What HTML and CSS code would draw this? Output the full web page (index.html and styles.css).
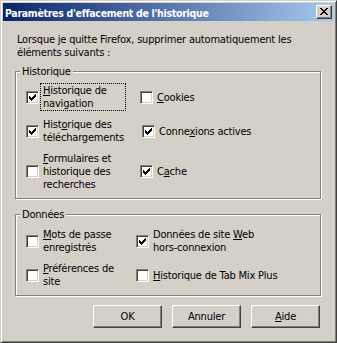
FILE: index.html
```html
<!DOCTYPE html>
<html lang="fr">
<head>
<meta charset="utf-8">
<title>Paramètres d'effacement de l'historique</title>
<link rel="stylesheet" href="styles.css">
</head>
<body>
<div class="window">
  <div class="titlebar">
    <span class="title">Paramètres d'effacement de l'historique</span>
    <span class="close"><svg width="8" height="7" viewBox="0 0 8 7" shape-rendering="crispEdges"><path d="M0 0h2v1h-2zM6 0h2v1h-2zM1 1h2v1h-2zM5 1h2v1h-2zM2 2h4v1h-4zM3 3h2v1h-2zM2 4h4v1h-4zM1 5h2v1h-2zM5 5h2v1h-2zM0 6h2v1h-2zM6 6h2v1h-2z" fill="#000"/></svg></span>
  </div>
  <div class="content">
    <p class="intro">Lorsque je quitte Firefox, supprimer automatiquement les<br>éléments suivants :</p>

    <section class="group g1">
      <span class="legend">Historique</span>
      <div class="opts">
        <div class="opt"><span class="cb"><svg width="7" height="7" viewBox="0 0 7 7" shape-rendering="crispEdges"><path d="M6 0h1v1h-1zM5 1h2v1h-2zM0 2h1v1h-1zM4 2h3v1h-3zM0 3h2v1h-2zM3 3h3v1h-3zM0 4h5v1h-5zM1 5h3v1h-3zM2 6h1v1h-1z" fill="#000"/></svg></span><span class="lbl focus"><u>H</u>istorique de<br>navigation</span></div>
        <div class="opt"><span class="cb"></span><span class="lbl"><u>C</u>ookies</span></div>
        <div class="opt"><span class="cb"><svg width="7" height="7" viewBox="0 0 7 7" shape-rendering="crispEdges"><path d="M6 0h1v1h-1zM5 1h2v1h-2zM0 2h1v1h-1zM4 2h3v1h-3zM0 3h2v1h-2zM3 3h3v1h-3zM0 4h5v1h-5zM1 5h3v1h-3zM2 6h1v1h-1z" fill="#000"/></svg></span><span class="lbl">Hist<u>o</u>rique des<br>téléchargements</span></div>
        <div class="opt shift"><span class="cb"><svg width="7" height="7" viewBox="0 0 7 7" shape-rendering="crispEdges"><path d="M6 0h1v1h-1zM5 1h2v1h-2zM0 2h1v1h-1zM4 2h3v1h-3zM0 3h2v1h-2zM3 3h3v1h-3zM0 4h5v1h-5zM1 5h3v1h-3zM2 6h1v1h-1z" fill="#000"/></svg></span><span class="lbl">Conne<u>x</u>ions actives</span></div>
        <div class="opt"><span class="cb"></span><span class="lbl"><u>F</u>ormulaires et<br>historique des<br>recherches</span></div>
        <div class="opt"><span class="cb"><svg width="7" height="7" viewBox="0 0 7 7" shape-rendering="crispEdges"><path d="M6 0h1v1h-1zM5 1h2v1h-2zM0 2h1v1h-1zM4 2h3v1h-3zM0 3h2v1h-2zM3 3h3v1h-3zM0 4h5v1h-5zM1 5h3v1h-3zM2 6h1v1h-1z" fill="#000"/></svg></span><span class="lbl">C<u>a</u>che</span></div>
      </div>
    </section>

    <section class="group g2">
      <span class="legend">Données</span>
      <div class="opts">
        <div class="opt"><span class="cb"></span><span class="lbl"><u>M</u>ots de passe<br>enregistrés</span></div>
        <div class="opt"><span class="cb"><svg width="7" height="7" viewBox="0 0 7 7" shape-rendering="crispEdges"><path d="M6 0h1v1h-1zM5 1h2v1h-2zM0 2h1v1h-1zM4 2h3v1h-3zM0 3h2v1h-2zM3 3h3v1h-3zM0 4h5v1h-5zM1 5h3v1h-3zM2 6h1v1h-1z" fill="#000"/></svg></span><span class="lbl">Données de site <u>W</u>eb<br>hors-connexion</span></div>
        <div class="opt"><span class="cb"></span><span class="lbl"><u>P</u>références de<br>site</span></div>
        <div class="opt"><span class="cb"></span><span class="lbl"><u>H</u>istorique de Tab Mix Plus</span></div>
      </div>
    </section>

    <div class="buttons">
      <span class="btn">OK</span>
      <span class="btn">Annuler</span>
      <span class="btn"><span><u>A</u>ide</span></span>
    </div>
  </div>
</div>
</body>
</html>
```
FILE: styles.css
```css
* { box-sizing: border-box; }

body {
  margin: 0;
  background: #D4D0C8;
  font-family: "DejaVu Sans Condensed", "Liberation Sans", sans-serif;
  font-size: 11px;
  line-height: 13px;
  letter-spacing: -0.2px;
  color: #000;
}

.window {
  width: 337px;
  height: 343px;
  border: 1px solid;
  border-color: #D4D0C8 #404040 #404040 #D4D0C8;
  box-shadow: inset 1px 1px 0 #fff, inset -1px -1px 0 #808080;
  padding: 2px;
  background: #D4D0C8;
  display: flex;
  flex-direction: column;
}

.titlebar {
  flex: none;
  height: 18px;
  background: linear-gradient(to right, #0A246A, #A6CAF0);
  display: flex;
  align-items: center;
  justify-content: space-between;
  padding: 0 2px 0 2px;
}

.title {
  color: #fff;
  font-weight: bold;
  font-size: 10.5px;
  letter-spacing: -0.3px;
  line-height: 18px;
  padding-top: 1px;
  white-space: nowrap;
}

.close {
  flex: none;
  width: 16px;
  height: 14px;
  background: #D4D0C8;
  border: 1px solid;
  border-color: #fff #404040 #404040 #fff;
  box-shadow: inset -1px -1px 0 #808080;
  padding: 2px 0 0 3px;
  display: flex;
  align-items: flex-start;
}
.close svg { display: block; }

.content {
  flex: 1;
  padding: 12px 13px 0 12px;
}

.intro {
  margin: 0 0 12px 2px;
  white-space: nowrap;
}

.group {
  position: relative;
  border: 1px solid #808080;
  box-shadow: inset 1px 1px 0 #fff, 1px 1px 0 #fff;
}
.g1 { padding: 11px 0 6px 10px; }
.g2 { margin-top: 15px; padding: 12px 0 6px 10px; }

.legend {
  position: absolute;
  top: -7px;
  left: 4px;
  padding: 0 2px;
  background: #D4D0C8;
}

.opts {
  display: grid;
  grid-template-columns: 114px auto;
  row-gap: 6px;
  align-items: center;
}
.g2 .opts { grid-template-columns: 110px auto; }

.opt {
  display: flex;
  align-items: center;
  gap: 1px;
  white-space: nowrap;
}
.opt.shift { padding-left: 2px; }

.cb {
  flex: none;
  width: 13px;
  height: 13px;
  background: #fff;
  border: 1px solid;
  border-color: #808080 #fff #fff #808080;
  box-shadow: inset 1px 1px 0 #404040, inset -1px -1px 0 #D4D0C8;
  padding: 2px;
  display: flex;
}
.cb svg { display: block; }

.lbl {
  border: 1px dotted transparent;
  padding: 0 2px;
}
.lbl.focus {
  border-color: #000;
  width: 86px;
}

.buttons {
  display: flex;
  justify-content: flex-end;
  gap: 10px;
  margin-top: 9px;
  padding-right: 1px;
}

.btn {
  width: 69px;
  height: 23px;
  border: 1px solid;
  border-color: #fff #404040 #404040 #fff;
  box-shadow: inset -1px -1px 0 #808080;
  display: flex;
  align-items: center;
  justify-content: center;
}
```
